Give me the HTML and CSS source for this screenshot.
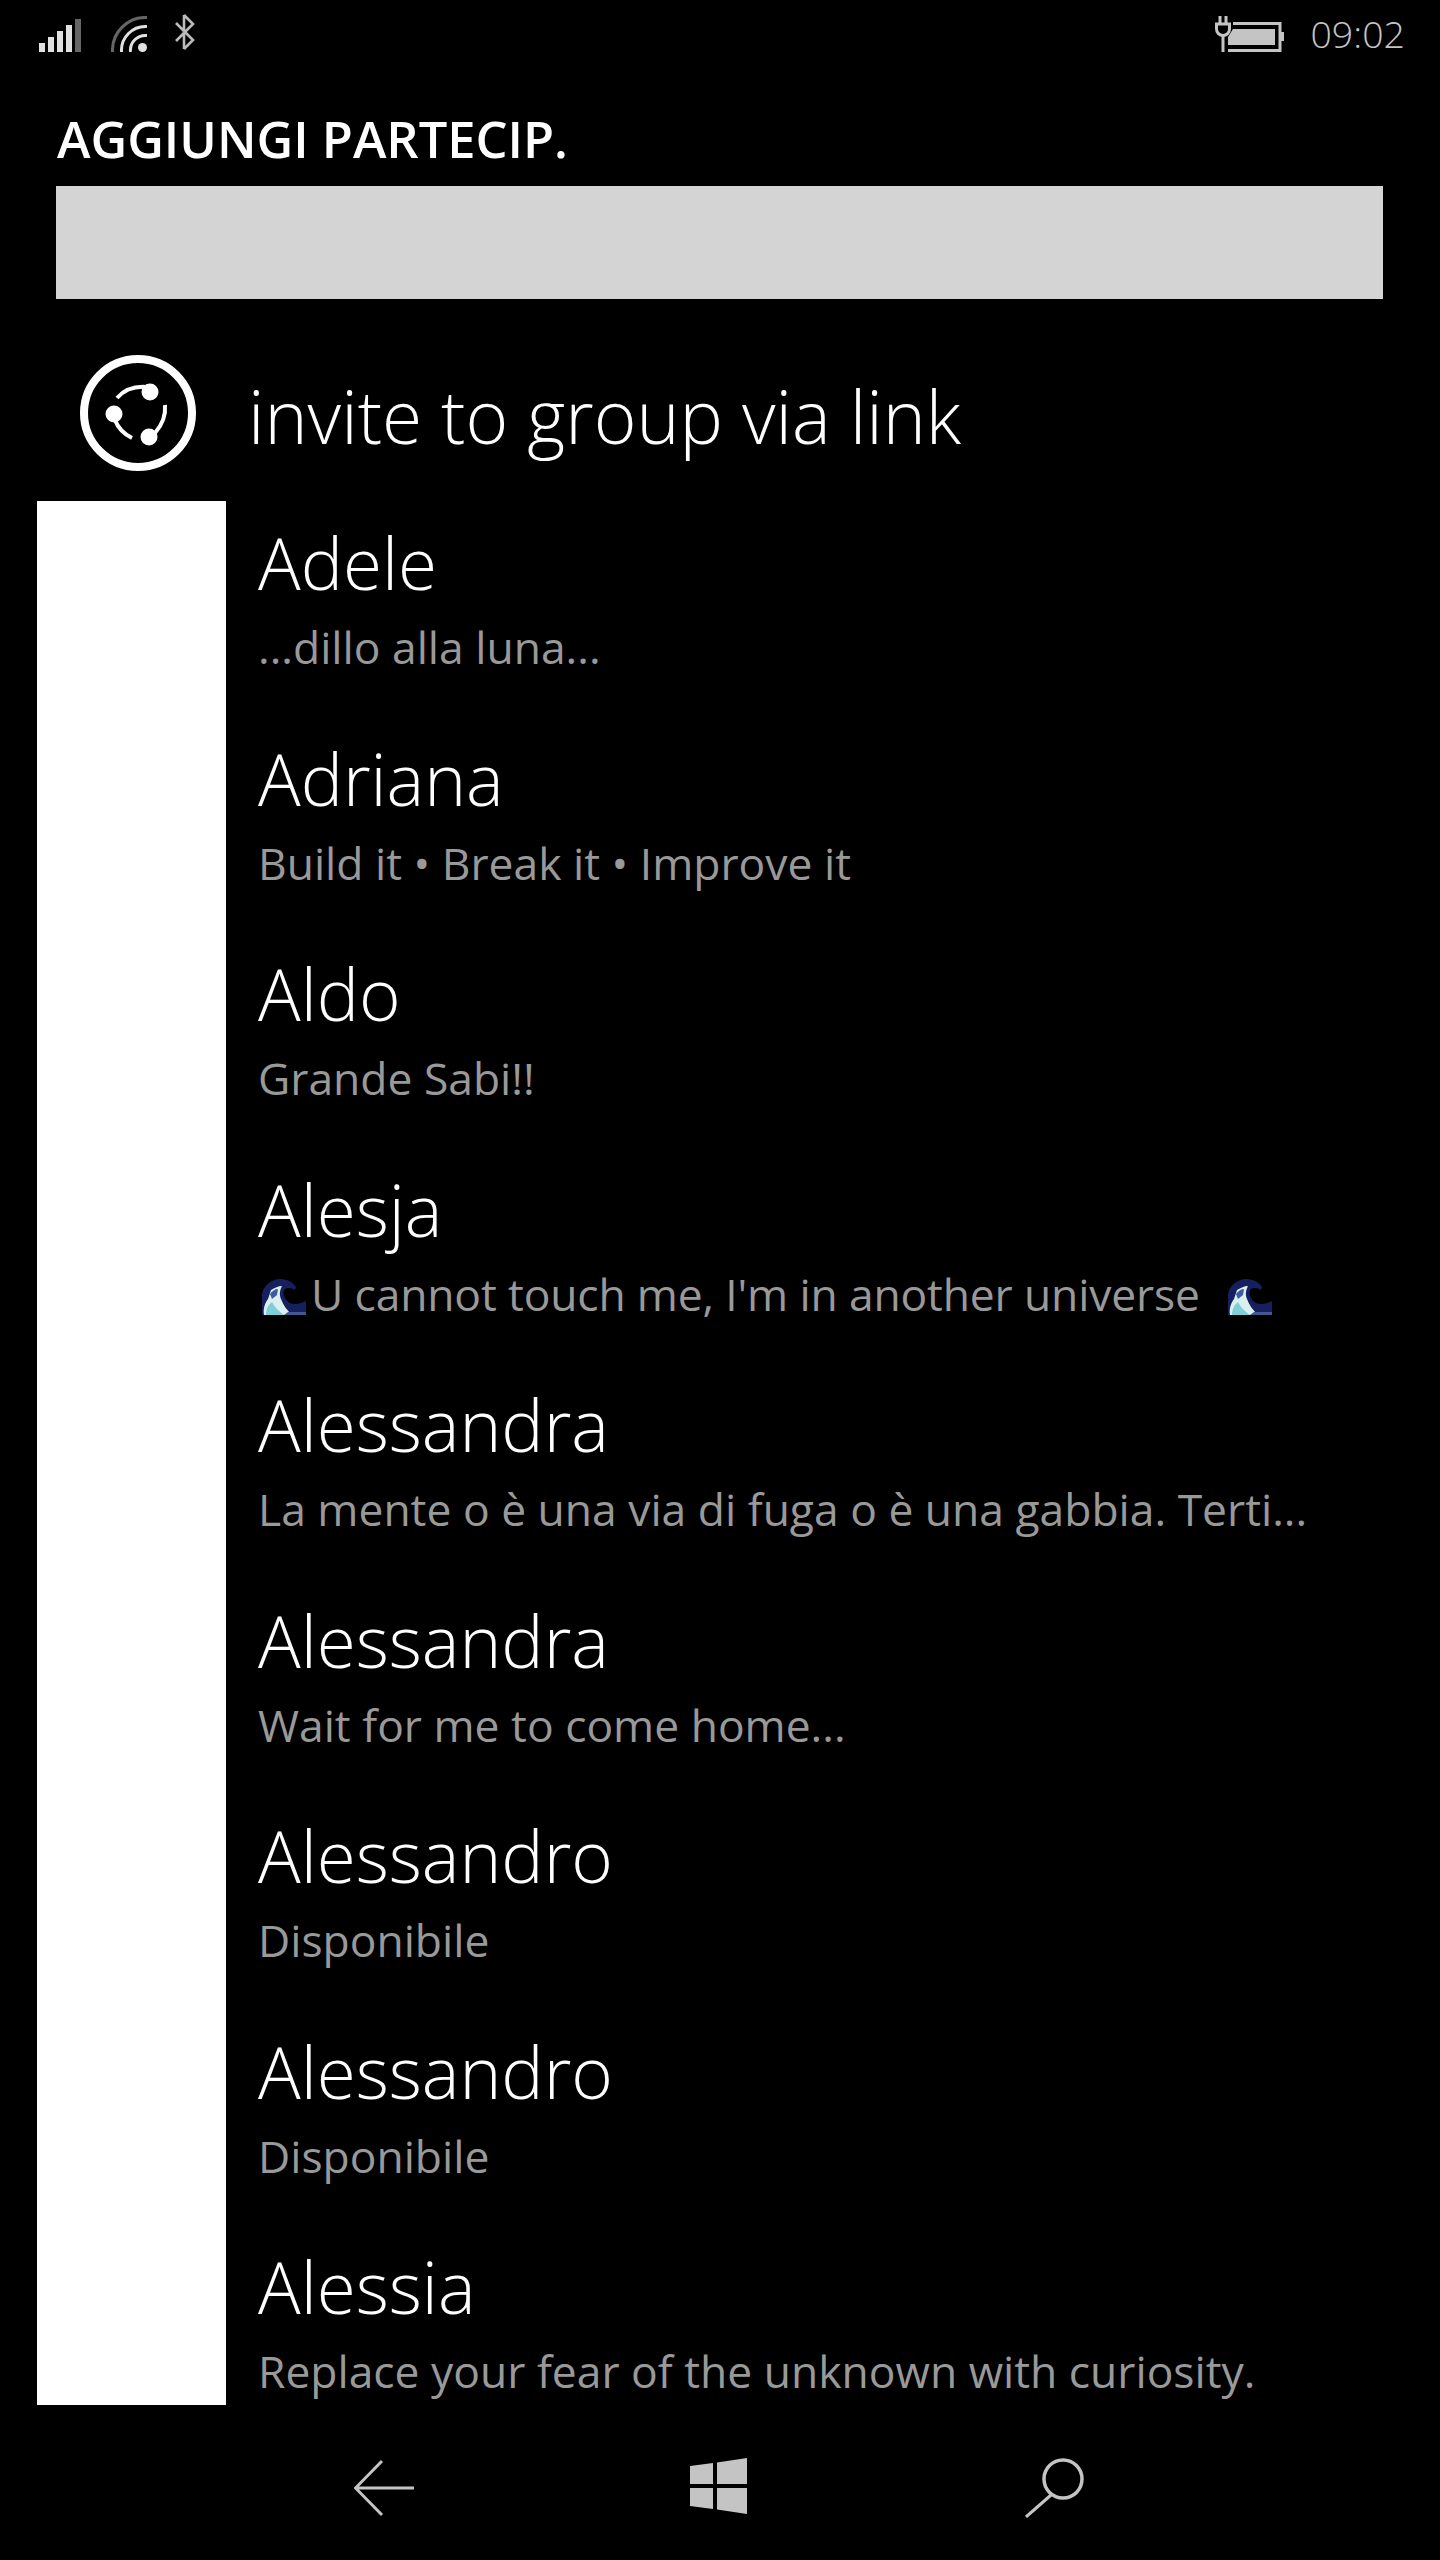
FILE: index.html

```html
<!DOCTYPE html>
<html lang="en">
<head>
    <meta charset="UTF-8">
    <meta name="viewport" content="width=device-width, initial-scale=1.0">
    <title>Aggiungi partecip.</title>
    <link rel="stylesheet" href="styles.css">
</head>
<body>
    <svg width="0" height="0" class="defs">
        <symbol id="wave" viewBox="0 0 44 36">
            <path d="M0 36V15C2 6 9 1 17 0c7 0 13 2 17 8l-1 3c-3-2-7-3-10-1-3 3-1 8 2 12 4 4 11 4 19 0v14z" fill="#16205e"/>
            <path d="M2 36c-1-7 1-12 4-16l3-9c4-2 7-4 11-4-2 4-3 8-1 13 2 6 6 11 11 16z" fill="#dcefef"/>
            <path d="M4 36c0-6 2-10 6-13 2 4 6 9 12 13z" fill="#7fcfd8"/>
            <path d="M8 15c2-3 5-5 8-5l-1 6-5 4z" fill="#3c5ba0"/>
            <path d="M26 33h18v3H22z" fill="#45558f"/>
        </symbol>
    </svg>

    <div class="statusbar">
        <div class="status-left">
            <svg class="sig" width="42" height="33" viewBox="0 0 42 33">
                <rect x="0" y="24" width="6" height="9" fill="#e2e2e2"/>
                <rect x="9" y="18" width="6" height="15" fill="#e2e2e2"/>
                <rect x="18" y="12" width="6" height="21" fill="#e2e2e2"/>
                <rect x="27" y="6" width="6" height="27" fill="#e2e2e2"/>
                <rect x="36" y="0" width="6" height="33" fill="#666"/>
            </svg>
            <svg class="wifi" width="36" height="36" viewBox="0 0 36 36">
                <path d="M1.500 36A33 33 0 0 1 36 1.500" fill="none" stroke="#666" stroke-width="3"/>
                <path d="M10.500 36A24 24 0 0 1 36 10.500" fill="none" stroke="#e2e2e2" stroke-width="3"/>
                <path d="M19.500 36A15 15 0 0 1 36 19.500" fill="none" stroke="#e2e2e2" stroke-width="3"/>
                <circle cx="31.500" cy="31.500" r="4.500" fill="#e2e2e2"/>
            </svg>
            <svg class="bt" width="20" height="38" viewBox="0 0 20 38">
                <path d="M9 2V36M1 10L18 27L9 36M1 28L18 11L9 2" fill="none" stroke="#bbb" stroke-width="2.600"/>
            </svg>
        </div>
        <div class="status-right">
            <svg width="69" height="36" viewBox="0 0 69 36">
                <path d="M5 0V8M11 0V8" stroke="#c4c4c4" stroke-width="3" fill="none"/>
                <path d="M1.500 8H14.500V13A6.500 6.500 0 0 1 1.500 13Z" fill="none" stroke="#c4c4c4" stroke-width="3"/>
                <path d="M8 20V36" stroke="#c4c4c4" stroke-width="3"/>
                <path d="M18 7.500H65V34.500H13" fill="none" stroke="#c4c4c4" stroke-width="3"/>
                <path d="M66 16H69V25H66Z" fill="#c4c4c4"/>
                <path d="M18 13H60V29H13V21Z" fill="#c4c4c4"/>
            </svg>
            <span class="clock">09:02</span>
        </div>
    </div>

    <h1 class="title">AGGIUNGI PARTECIP.</h1>
    <div class="searchbox"></div>

    <div class="invite">
        <svg class="invite-icon" width="120" height="120" viewBox="0 0 120 120">
            <circle cx="60" cy="60" r="54" fill="none" stroke="#fff" stroke-width="8"/>
            <path d="M39 45C46 37 56 33 69 34M87 52C88 63 84 72 77 80M37 67C40 75 46 81 54 85" fill="none" stroke="#fff" stroke-width="4"/>
            <circle cx="72" cy="39" r="8.500" fill="#fff"/>
            <circle cx="36" cy="61" r="8.500" fill="#fff"/>
            <circle cx="71" cy="84" r="8.500" fill="#fff"/>
        </svg>
        <span class="invite-text">invite to group via link</span>
    </div>

    <div class="contacts">
        <div class="avatars"></div>
        <div class="rows">
            <div class="row">
                <div class="name">Adele</div>
                <div class="status">...dillo alla luna...</div>
            </div>
            <div class="row">
                <div class="name">Adriana</div>
                <div class="status">Build it • Break it • Improve it</div>
            </div>
            <div class="row">
                <div class="name">Aldo</div>
                <div class="status">Grande Sabi!!</div>
            </div>
            <div class="row">
                <div class="name">Alesja</div>
                <div class="status status-tight"><svg class="emoji"><use href="#wave"/></svg>U cannot touch me, I'm in another universe <svg class="emoji emoji-end"><use href="#wave"/></svg></div>
            </div>
            <div class="row">
                <div class="name">Alessandra</div>
                <div class="status">La mente o è una via di fuga o è una gabbia. Terti...</div>
            </div>
            <div class="row">
                <div class="name">Alessandra</div>
                <div class="status">Wait for me to come home...</div>
            </div>
            <div class="row">
                <div class="name">Alessandro</div>
                <div class="status">Disponibile</div>
            </div>
            <div class="row">
                <div class="name">Alessandro</div>
                <div class="status">Disponibile</div>
            </div>
            <div class="row">
                <div class="name">Alessia</div>
                <div class="status">Replace your fear of the unknown with curiosity.</div>
            </div>
        </div>
    </div>

    <div class="navbar">
        <svg width="60" height="60" viewBox="0 0 60 60">
            <path d="M28 3L1.500 30L28 57M1.500 30H60" fill="none" stroke="#c4c4c4" stroke-width="3"/>
        </svg>
        <svg width="57" height="56" viewBox="0 0 57 56">
            <path d="M0 8L23 5V26H0ZM27 4.500L57 0V26H27ZM0 30H23V51L0 48ZM27 30H57V56L27 51.500Z" fill="#c4c4c4"/>
        </svg>
        <svg class="nav-search" width="60" height="60" viewBox="0 0 60 60">
            <circle cx="38" cy="21" r="19" fill="none" stroke="#c4c4c4" stroke-width="3.500"/>
            <path d="M26 37L1 59" fill="none" stroke="#c4c4c4" stroke-width="3"/>
        </svg>
    </div>
</body>
</html>
```

FILE: styles.css

```css
html, body { margin: 0; padding: 0; background: #000; }
body { width: 1440px; height: 2560px; overflow: hidden; font-family: "Open Sans", "Noto Sans", sans-serif; color: #fff; }
.defs { display: block; }

.statusbar { height: 70px; display: flex; justify-content: space-between; align-items: flex-start; padding: 0 35px 0 39px; }
.status-left { display: flex; align-items: flex-end; height: 52px; }
.status-left .wifi { margin-left: 30px; }
.status-left .bt { margin-left: 28px; margin-bottom: 1px; }
.status-right { display: flex; align-items: center; gap: 26px; padding-top: 14px; }
.clock { font-size: 37.500px; line-height: 40px; font-weight: 300; color: #c4c4c4; }

.title { margin: 44px 0 0 57px; font-size: 50.600px; line-height: 50px; font-weight: 600; height: 72px; }
.searchbox { margin: 0 57px 0 56px; height: 113px; background: #d4d4d4; }

.invite { display: flex; align-items: center; height: 176px; padding: 26px 0 0 78px; }
.invite-text { margin-left: 50px; padding-top: 6px; font-size: 73px; font-weight: 300; line-height: 90px; }

.contacts { display: flex; margin-left: 37px; height: 1904px; overflow: hidden; }
.avatars { width: 189px; height: 1904px; background: #fff; flex: none; }
.rows { margin-left: 32px; }
.row { height: 215.500px; }
.name { font-size: 71px; line-height: 100px; font-weight: 300; padding-top: 12px; }
.status { font-size: 44.400px; line-height: 60px; color: #999; white-space: nowrap; margin-top: 4px; }
.status-tight { letter-spacing: -0.15px; }
.emoji { width: 44px; height: 36px; margin: 0 5px 0 4px; vertical-align: -4px; }
.emoji-end { margin: 0 0 0 17px; }

.navbar { height: 155px; display: flex; align-items: flex-start; gap: 276px; padding: 53px 0 0 354px; box-sizing: border-box; }
.nav-search { margin-left: 2px; }
```
